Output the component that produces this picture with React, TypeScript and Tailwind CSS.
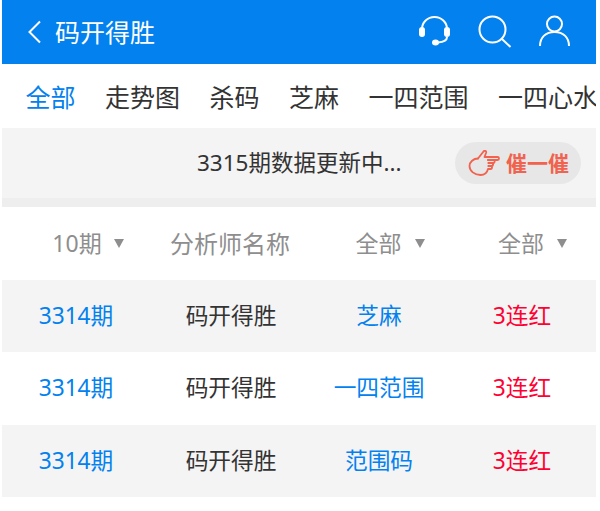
const font = { fontFamily: '"Noto Sans", "Noto Sans CJK SC", sans-serif' };

const tabs = ["全部", "走势图", "杀码", "芝麻", "一四范围", "一四心水"];
const rows = [
  { type: "芝麻", shaded: true, h: "h-[72px]" },
  { type: "一四范围", shaded: false, h: "h-[73px]" },
  { type: "范围码", shaded: true, h: "h-[72px]" },
];
const gridClass = "grid grid-cols-[148px_162px_134px_150px] items-center text-center";

function HeaderIcons() {
  return (
    <div className="flex items-center gap-[26px] pr-[25px]">
      <svg width="34" height="34" viewBox="0 0 34 34" fill="none" stroke="#fff" strokeWidth="2">
        <path d="M4 14a12.500 12 0 0 1 25 0" />
        <rect x="1" y="12" width="6" height="10" rx="3" fill="#fff" stroke="none" />
        <rect x="26" y="12" width="6" height="10" rx="3" fill="#fff" stroke="none" />
        <path d="M29 22c0 3-3 5-9 5.500" />
        <ellipse cx="17.500" cy="27.500" rx="3.500" ry="3" fill="#fff" stroke="none" />
      </svg>
      <svg width="34" height="34" viewBox="0 0 34 34" fill="none" stroke="#fff" strokeWidth="2">
        <circle cx="14.500" cy="14.500" r="13" />
        <path d="M24 24l8.500 8" />
      </svg>
      <svg width="33" height="34" viewBox="0 0 33 34" fill="none" stroke="#fff" strokeWidth="2">
        <circle cx="16.500" cy="9" r="7.500" />
        <path d="M2 31C2 22 8 17 16.500 17S31 22 31 31" />
      </svg>
    </div>
  );
}

function Hand() {
  return (
    <svg width="32" height="27" viewBox="0 0 32 27" fill="none" stroke="#f1624f" strokeWidth="1.800" strokeLinejoin="round" strokeLinecap="round">
      <path d="M10 8.500 15.500 1.500c1-1.300 3-.6 2.700 1L16.500 7H29.500c2 0 2 3 0 3H20" />
      <path d="M20 10h5.500c1.600 0 1.600 3 0 3H20.500" />
      <path d="M20.500 13H24c1.500 0 1.500 3 0 3h-3.500" />
      <path d="M20.500 16H23c1.400 0 1.400 3 0 3h-3c-.8 3.500-3.500 6-7.500 6C6.500 25 1.500 21 1.500 16 1.500 12 5.500 8.500 10 8.500" />
    </svg>
  );
}

function Caret() {
  return <span className="w-0 h-0 border-x-[5px] border-x-transparent border-t-[9px] border-t-[#8e8e8e]" />;
}

export default function App() {
  return (
    <div className="w-[600px] h-[511px] bg-white overflow-hidden pl-[2px] pr-[4px]" style={font}>
      <header className="h-[64px] bg-[#0281ef] flex items-center justify-between text-white">
        <div className="flex items-center">
          <svg className="ml-[25px]" width="16" height="24" viewBox="0 0 16 24" fill="none" stroke="#fff" strokeWidth="2">
            <path d="M13 1.500 2.500 12 13 22.500" />
          </svg>
          <span className="ml-[12px] text-[25px] leading-none">码开得胜</span>
        </div>
        <HeaderIcons />
      </header>

      <nav className="h-[64px] flex items-center pl-[23.500px] pt-[4px] gap-[29.500px] overflow-hidden whitespace-nowrap text-[25px] text-[#333333]">
        {tabs.map((t, i) => (
          <span key={t} className={i === 0 ? "text-[#0281ef]" : ""}>{t}</span>
        ))}
      </nav>

      <section className="h-[70px] bg-[#f4f4f4] relative flex items-center">
        <span className="ml-[195px] text-[22.500px] text-[#333333]">3315期数据更新中...</span>
        <div className="absolute left-[453px] top-[14px] w-[126px] h-[42px] rounded-full bg-[#e7e7e7] flex items-center pl-[13px] gap-[6px]">
          <Hand />
          <span className="text-[21px] font-bold text-[#f1624f] leading-none">催一催</span>
        </div>
      </section>
      <div className="h-[9px] bg-[#eeeeee]" />

      <div className={`h-[73px] ${gridClass} text-[23px] text-[#8e8e8e]`}>
        <div className="flex items-center justify-center gap-[12px] pl-[24px]">
          <span>10期</span>
          <Caret />
        </div>
        <div className="text-[24px] pr-[2px]">分析师名称</div>
        <div className="flex items-center justify-center gap-[13px] pl-[22px]">
          <span>全部</span>
          <Caret />
        </div>
        <div className="flex items-center justify-center gap-[13px] pl-[23px]">
          <span>全部</span>
          <Caret />
        </div>
      </div>

      {rows.map((r) => (
        <div key={r.type} className={`${r.h} ${gridClass} text-[22.700px] ${r.shaded ? "bg-[#f4f4f4]" : "bg-white"}`}>
          <div className="text-[#0281ef]">3314期</div>
          <div className="text-[#333333]">码开得胜</div>
          <div className="text-[#0281ef]">{r.type}</div>
          <div className="text-[#ff0033] pl-[2px]">3连红</div>
        </div>
      ))}
    </div>
  );
}
